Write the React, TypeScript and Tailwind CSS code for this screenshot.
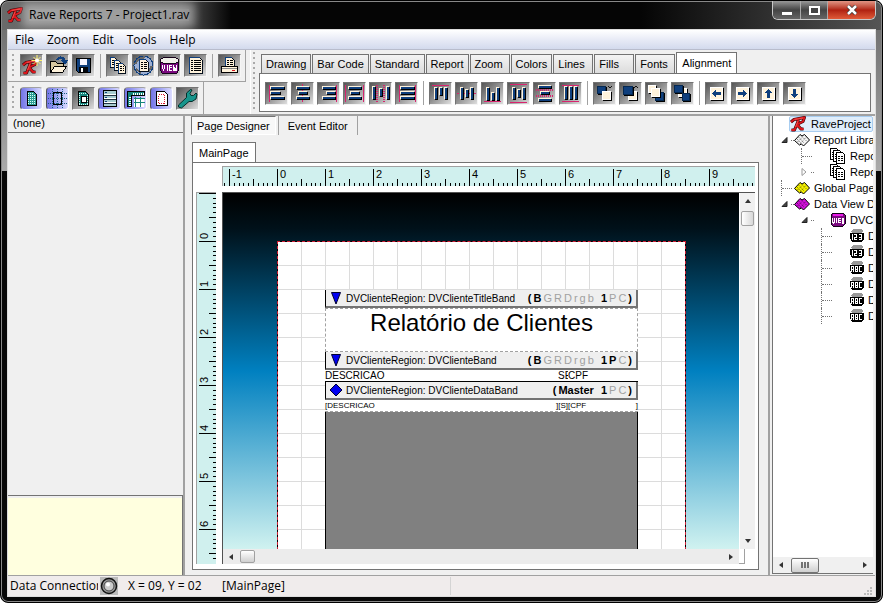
import React from 'react';

type Rect = [number, number, number, number];

const NAVY = '#0f3f7d';
const CREAM = '#fff3dc';
const PINK = '#d8246e';

/* ---------- icons ---------- */

const Glyph = ({ size = 21, children }: { size?: number; children: React.ReactNode }) => (
  <svg width={size} height={size} viewBox={`0 0 ${size} ${size}`} shapeRendering="crispEdges" aria-hidden="true" className="block shrink-0">
    {children}
  </svg>
);

const RaveMark = () => (
  <g fill="none" strokeLinejoin="round">
    <path d="M1.500 14h3L8.500 4M1 6 4 3.500 14.500 1.500 13 5.500 7 8.500l4 4.500h2.500" stroke="#3a0508" strokeWidth="3" />
    <path d="M1.500 14h3L8.500 4M1 6 4 3.500 14.500 1.500 13 5.500 7 8.500l4 4.500h2.500" stroke="#dc161c" strokeWidth="1.900" />
    <path d="M4.500 3.500 13 2M5.500 11l2.500-6" stroke="#ff7468" strokeWidth=".6" />
  </g>
);

const RaveLogo = () => (
  <svg width="16" height="16" viewBox="0 0 16 16" aria-hidden="true" className="block shrink-0">
    <RaveMark />
  </svg>
);

const Sheet = ({ x, y, w, h, lines = 3 }: { x: number; y: number; w: number; h: number; lines?: number }) => (
  <g>
    <path d={`M${x + 0.5} ${y + 0.5}h${w - 3}l3 3v${h - 3}h-${w}z`} fill={CREAM} stroke="#06101e" />
    <path d={`M${x + 0.5} ${y + h}V${y + 0.5}h${w - 3}`} stroke={NAVY} fill="none" />
    {Array.from({ length: lines }, (_, i) => (
      <path key={i} d={`M${x + 2} ${y + 3.5 + i * 2}h2m1 0h${w - 6}`} stroke="#000" />
    ))}
  </g>
);

const ViewDrum = () => (
  <Glyph>
    <path d="M1.500 5.500h18v10l-2 3h-14l-2-3z" fill="#7b0a80" stroke="#16021a" />
    <path d="M4.500 2.500h12l3 2v2l-3 2h-12l-3-2v-2z" fill="#f0f0e8" stroke="#16021a" />
    <path d="M3.500 10v3l1 2 1-2v-3M8.500 10v6M13 10.500h-2.500v5H13M10.500 12.500H13M14.500 10v5l1 .5.500-3 .5 3 1-.5V10" fill="none" stroke="#fff" />
  </Glyph>
);

const icons = {
  newReport: (
    <svg width="21" height="21" viewBox="0 0 21 21" aria-hidden="true" className="block shrink-0">
      <g transform="translate(1 4)">
        <RaveMark />
      </g>
      <path d="M16 0v11M10.500 5.500h10.500M12.500 2l7 7M19.500 2l-7 7" stroke="#fff36a" />
      <circle cx="16" cy="5.500" r="2" fill="#fff" />
    </svg>
  ),
  open: (
    <Glyph>
      <path d="M3.500 17.500v-11h5l2 2h6v3" fill="#d8c8a0" stroke="#000" />
      <path d="M3.500 17.500l4-6h12l-4 6z" fill={CREAM} stroke="#000" />
      <path d="M10 5c2-4 8-3 8 2m-3-2 3 3 2-3" fill="none" stroke={NAVY} strokeWidth="2" />
    </Glyph>
  ),
  save: (
    <Glyph>
      <path d="M3.500 3.500h14v14h-12l-2-2z" fill={NAVY} stroke="#000" />
      <path d="M7 4h7v6H7z" fill="#f4f4ff" />
      <path d="M6 12h9v5H6z" fill="#02060c" />
      <path d="M8 13h2v4H8z" fill="#fff" />
    </Glyph>
  ),
  copies: (
    <Glyph>
      <Sheet x={3} y={2} w={7} h={10} />
      <Sheet x={7} y={5} w={7} h={10} />
      <Sheet x={11} y={8} w={7} h={10} />
    </Glyph>
  ),
  globe: (
    <Glyph>
      <circle cx="10.500" cy="10.500" r="9.500" fill="#9db0d4" stroke={NAVY} />
      <path d="M2 9l4-5 6-2M3 14l5 4M15 17l4-6" stroke="#666" strokeWidth="2" fill="none" />
      <Sheet x={6} y={4} w={9} h={12} lines={4} />
    </Glyph>
  ),
  report: (
    <Glyph>
      <Sheet x={4} y={2} w={13} h={16} lines={6} />
    </Glyph>
  ),
  print: (
    <Glyph>
      <Sheet x={6} y={2} w={9} h={10} lines={3} />
      <path d="M2.500 11.500h16v6h-16z" fill={CREAM} stroke="#000" />
      <path d="M3 13.500h15" stroke="#888" />
      <path d="M13 15h3v1h-3z" fill="#d8141c" />
    </Glyph>
  ),
  gridPage: (
    <Glyph>
      <path d="M6.500 3.500h6l3 3v11h-9z" fill="#2c9c94" stroke="#000" />
      <path d="M7 5.500h6M7 7.500h8M7 9.500h8M7 11.500h8M7 13.500h8M7 15.500h8" stroke="#d8fff8" strokeDasharray="1 1" />
    </Glyph>
  ),
  snapGrid: (
    <Glyph>
      <path d="M1 5.500h19M1 15.500h19M5.500 1v19M15.500 1v19M10.500 1v19M1 10.500h19" stroke="#17607c" strokeDasharray="1 1" fill="none" />
      <path d="M6.500 4.500h8v12h-8z" fill="none" stroke="#000" />
    </Glyph>
  ),
  pageBox: (
    <Glyph>
      <path d="M5.500 3.500h7l3 3v11h-10z" fill="#17857c" stroke="#000" />
      <path d="M6 5.500h7M6.500 7v10M14.500 7v10M6 16.500h9" stroke="#d8fff8" strokeDasharray="1 1" />
      <path d="M8.500 8.500h5v6h-5z" fill="#fff" stroke="#000" />
    </Glyph>
  ),
  bands: (
    <Glyph>
      <path d="M4.500 2.500h13v16h-13z" fill="#a8ccd0" stroke="#000" />
      <path d="M5 7.500h12M5 11.500h12M5 15.500h12" stroke="#234" />
      <path d="M5 6.500h12M5 10.500h12M5 14.500h12" stroke="#fff" />
      <path d="M6 4.500h2M6 9.500h2M6 13.500h2" stroke={NAVY} />
    </Glyph>
  ),
  rulers: (
    <Glyph>
      <path d="M2.500 3.500h17v4h-13v11h-4z" fill="#17857c" stroke="#000" />
      <path d="M8 5.500h11M4.500 9v9" stroke="#fff" strokeWidth="2" strokeDasharray="1 1" />
      <path d="M9 10h10v9H9z" fill="#fff" />
      <path d="M9 10.500h11M9 14.500h11M10.500 9v10M15.500 9v10" stroke="#17857c" />
    </Glyph>
  ),
  marginPage: (
    <Glyph>
      <path d="M5.500 3.500h8l3 3v11h-11z" fill="#fff" stroke="#000" />
      <path d="M7.500 6.500h6v9h-6z" fill="none" stroke="#d8142c" strokeDasharray="1 1" />
    </Glyph>
  ),
  wrench: (
    <svg width="21" height="21" viewBox="0 0 21 21" aria-hidden="true" className="block shrink-0">
      <path d="M1.500 17 9.500 9.500V5l4-3.500 1.500.5-2 3.500 1 2 2.500 0 2.500-2.500 1 1-1 5-4 2.500h-3L4.500 20l-3-1z" fill="#17958c" stroke="#04302c" />
    </svg>
  ),
};

const Bar = ({ r: [x, y, w, h] }: { r: Rect }) => (
  <g>
    <rect x={x + 1} y={y + 1} width={w} height={h} fill="#000" />
    <rect x={x} y={y} width={w} height={h} fill={CREAM} />
    <rect x={x + 1} y={y + 1} width={w - 1} height={h - 1} fill={NAVY} />
  </g>
);

const Aligner = ({ bars, guides = [], dotted = '' }: { bars: Rect[]; guides?: Rect[]; dotted?: string }) => (
  <Glyph>
    {dotted && <path d={dotted} stroke={PINK} strokeWidth="2" strokeDasharray="1 1" fill="none" />}
    {bars.map((r, i) => (
      <Bar key={i} r={r} />
    ))}
    {guides.map(([x, y, width, height], i) => (
      <rect key={i} x={x} y={y} width={width} height={height} fill={PINK} />
    ))}
  </Glyph>
);

const rows = (xs: number[], ws: number[]): Rect[] => xs.map((x, i) => [x, 3 + i * 5, ws[i], 3]);
const cols = (ys: number[], hs: number[]): Rect[] => ys.map((y, i) => [4 + i * 5, y, 3, hs[i]]);

const Squares = ({ items, chevron = '' }: { items: { r: Rect; navy?: boolean }[]; chevron?: string }) => (
  <Glyph>
    {items.map(({ r: [x, y, w, h], navy }, i) => (
      <g key={i}>
        <rect x={x + 1} y={y + 1} width={w} height={h} fill="#000" />
        <rect x={x} y={y} width={w} height={h} fill={navy ? '#06284f' : '#fff'} />
        <rect x={x + 1} y={y + 1} width={w - 2} height={h - 2} fill={navy ? NAVY : CREAM} />
      </g>
    ))}
    {chevron && <path d={chevron} stroke="#111" fill="none" />}
  </Glyph>
);

const Nudge = ({ angle }: { angle: number }) => (
  <Glyph>
    <path d="M5 5h13v13H5z" fill="#000" />
    <path d="M4 4h13v13H4z" fill="#fff" />
    <path d="M5 5h11v11H5z" fill={CREAM} />
    <g transform={`rotate(${angle} 10.500 10.500)`}>
      <path d="M6 10.500 10 6v3h5v3h-5v3z" fill={NAVY} />
    </g>
  </Glyph>
);

/* ---------- toolbars ---------- */

type Tool = { label: string; icon: React.ReactNode; on?: boolean };

const ToolButton = ({ label, icon, on }: Tool) => (
  <button
    type="button"
    aria-label={label}
    aria-pressed={on}
    className={
      on
        ? 'flex h-[23px] w-[23px] items-center justify-center rounded-sm border border-r-white border-b-white border-l-neutral-600 border-t-neutral-400 bg-linear-to-r from-[#7474e6] to-[#dcdcff]'
        : 'flex h-[23px] w-[23px] items-center justify-center border border-r-neutral-100 border-b-neutral-100 border-l-neutral-500 border-t-neutral-500 bg-linear-to-br from-[#555] to-[#dedede]'
    }
  >
    {icon}
  </button>
);

const ToolGroups = ({ groups }: { groups: Tool[][] }) => (
  <div className="flex items-center gap-[3px]">
    {groups.map((group, i) => (
      <React.Fragment key={i}>
        {i > 0 && <span className="mx-0.5 h-6 w-px bg-neutral-400" />}
        {group.map((t) => (
          <ToolButton key={t.label} {...t} />
        ))}
      </React.Fragment>
    ))}
  </div>
);

const Grip = () => <span className="w-0.5 shrink-0 self-stretch bg-[repeating-linear-gradient(#aaa_0_2px,transparent_2px_5px)]" />;

const fileTools: Tool[][] = [
  [
    { label: 'New', icon: icons.newReport },
    { label: 'Open', icon: icons.open },
    { label: 'Save', icon: icons.save },
  ],
  [
    { label: 'New report', icon: icons.copies },
    { label: 'New global page', icon: icons.globe },
    { label: 'New data object', icon: <ViewDrum /> },
    { label: 'New report page', icon: icons.report },
  ],
  [{ label: 'Execute report', icon: icons.print }],
];

const designTools: Tool[][] = [
  [
    { label: 'Show grid', icon: icons.gridPage, on: true },
    { label: 'Snap to grid', icon: icons.snapGrid, on: true },
    { label: 'Grid on top', icon: icons.pageBox },
    { label: 'Show band headers', icon: icons.bands, on: true },
    { label: 'Show rulers', icon: icons.rulers, on: true },
    { label: 'Show waste area', icon: icons.marginPage, on: true },
    { label: 'Preferences', icon: icons.wrench },
  ],
];

const alignTools: Tool[][] = [
  [
    { label: 'Align left', icon: <Aligner bars={rows([4, 4, 4], [14, 10, 14])} guides={[[3, 2, 1, 17]]} /> },
    { label: 'Center horizontally', icon: <Aligner bars={rows([4, 6, 4], [13, 9, 13])} guides={[[10, 1, 1, 2], [10, 7, 1, 1], [10, 12, 1, 1], [10, 17, 1, 2]]} /> },
    { label: 'Align right', icon: <Aligner bars={rows([4, 8, 4], [13, 9, 13])} guides={[[18, 2, 1, 17]]} /> },
    { label: 'Center in parent', icon: <Aligner bars={rows([4, 6, 4], [13, 9, 13])} guides={[[1, 2, 1, 17], [19, 2, 1, 17]]} /> },
    { label: 'Space horizontally', icon: <Aligner bars={[[2, 3, 3, 13], [9, 5, 3, 8], [16, 3, 3, 13]]} dotted="M7 2v17M14 2v17" /> },
    { label: 'Equate widths', icon: <Aligner bars={rows([4, 4, 4], [14, 14, 14])} guides={[[3, 2, 1, 17], [19, 2, 1, 17]]} /> },
  ],
  [
    { label: 'Align tops', icon: <Aligner bars={cols([4, 4, 4], [12, 8, 12])} guides={[[2, 2, 17, 1]]} /> },
    { label: 'Center vertically', icon: <Aligner bars={cols([4, 6, 4], [12, 8, 12])} guides={[[1, 10, 2, 1], [8, 10, 1, 1], [13, 10, 1, 1], [18, 10, 2, 1]]} /> },
    { label: 'Align bottoms', icon: <Aligner bars={cols([4, 9, 4], [13, 8, 13])} guides={[[2, 18, 17, 1]]} /> },
    { label: 'Center in parent vertically', icon: <Aligner bars={cols([4, 6, 4], [12, 8, 12])} guides={[[2, 1, 17, 1], [2, 19, 17, 1]]} /> },
    { label: 'Space vertically', icon: <Aligner bars={[[4, 2, 13, 3], [6, 8, 9, 3], [4, 15, 13, 3]]} dotted="M2 7h17M2 13h17" /> },
    { label: 'Equate heights', icon: <Aligner bars={cols([3, 3, 3], [13, 13, 13])} guides={[[2, 2, 17, 1], [2, 18, 17, 1]]} /> },
  ],
  [
    { label: 'Move forward', icon: <Squares items={[{ r: [3, 3, 9, 8], navy: true }, { r: [8, 8, 9, 9] }]} chevron="M14 3l2 2 2-2" /> },
    { label: 'Move behind', icon: <Squares items={[{ r: [8, 8, 9, 9] }, { r: [3, 3, 10, 9], navy: true }]} chevron="M14 5l2-2 2 2" /> },
    { label: 'Bring to front', icon: <Squares items={[{ r: [9, 9, 9, 9], navy: true }, { r: [2, 2, 8, 8] }, { r: [5, 5, 9, 9] }]} /> },
    { label: 'Send to back', icon: <Squares items={[{ r: [6, 5, 9, 9] }, { r: [2, 2, 9, 8], navy: true }, { r: [10, 10, 8, 8], navy: true }]} /> },
  ],
  [
    { label: 'Tap left', icon: <Nudge angle={0} /> },
    { label: 'Tap right', icon: <Nudge angle={180} /> },
    { label: 'Tap up', icon: <Nudge angle={90} /> },
    { label: 'Tap down', icon: <Nudge angle={270} /> },
  ],
];

const toolTabs = ['Drawing', 'Bar Code', 'Standard', 'Report', 'Zoom', 'Colors', 'Lines', 'Fills', 'Fonts'];

const Toolbars = () => (
  <div className="flex h-16 shrink-0">
    <div className="shrink-0">
      <div className="flex h-8 w-fit items-center border-r border-b border-neutral-400 px-1 py-1">
        <Grip />
        <span className="w-1.5" />
        <ToolGroups groups={fileTools} />
      </div>
      <div className="flex h-8 w-fit items-center border-r border-neutral-400 px-1 py-1">
        <Grip />
        <span className="w-1.5" />
        <ToolGroups groups={designTools} />
      </div>
    </div>
    <div className="ml-1 flex min-w-0 flex-1 gap-1 border-l border-white pt-0.5 pr-1 pb-0.5 pl-0.5">
      <Grip />
      <div className="flex min-w-0 flex-1 flex-col">
        <div role="tablist" className="flex items-end gap-px pl-0.5">
          {toolTabs.map((t) => (
            <button
              key={t}
              type="button"
              role="tab"
              className="h-[19px] min-w-[40px] border border-b-0 border-neutral-500 bg-linear-to-b from-[#f4f4f4] to-[#dcdcdc] px-1 text-left whitespace-nowrap"
            >
              {t}
            </button>
          ))}
          <button type="button" role="tab" aria-selected="true" className="-mb-px h-[22px] border border-b-0 border-neutral-500 bg-white px-[5px] pb-px">
            Alignment
          </button>
        </div>
        <div className="flex flex-1 items-center border border-neutral-500 bg-white px-[5px] pt-px">
          <ToolGroups groups={alignTools} />
        </div>
      </div>
    </div>
  </div>
);

/* ---------- window chrome ---------- */

const TitleBar = () => (
  <div className="flex h-7 shrink-0 items-start justify-between">
    <div className="flex h-7 items-center gap-1.5">
      <RaveLogo />
      <h1 className="bg-white/40 font-['Open_Sans',sans-serif] text-[12px] leading-3 text-black shadow-[0_0_8px_6px_rgba(255,255,255,0.4)]">
        Rave Reports 7 - Project1.rav
      </h1>
    </div>
    <div className="flex h-[19px] overflow-hidden rounded-b-md border border-t-0 border-[#c8c8c8]">
      <button type="button" aria-label="Minimize" className="flex w-7 items-center justify-center border-r border-[#aaa] bg-linear-to-b from-[#999] via-[#444] via-50% to-[#666]">
        <span className="mt-1.5 h-[3px] w-2.5 bg-white" />
      </button>
      <button type="button" aria-label="Maximize" className="flex w-[27px] items-center justify-center border-r border-[#aaa] bg-linear-to-b from-[#999] via-[#444] via-50% to-[#666]">
        <span className="h-[9px] w-[11px] border-2 border-white bg-[#444]" />
      </button>
      <button type="button" aria-label="Close" className="flex w-[47px] items-center justify-center bg-linear-to-b from-[#e09484] via-[#b02010] via-50% to-[#e05a38]">
        <svg width="12" height="10" viewBox="0 0 12 10" aria-hidden="true">
          <path d="M2 1l8 8M10 1 2 9" stroke="#333" strokeWidth="4" />
          <path d="M2 1l8 8M10 1 2 9" stroke="#fff" strokeWidth="2.500" />
        </svg>
      </button>
    </div>
  </div>
);

const MenuBar = () => (
  <nav className="flex h-5 shrink-0 items-center gap-[13px] border-b border-[#b8bccc] bg-linear-to-b from-white via-[#e8ebf6] to-[#d3daed] pl-[7px] font-['Open_Sans',sans-serif] text-[12px]">
    {['File', 'Zoom', 'Edit', 'Tools', 'Help'].map((m) => (
      <button key={m} type="button">
        {m}
      </button>
    ))}
  </nav>
);

const Arrow = ({ dir }: { dir: 'up' | 'down' | 'left' | 'right' }) => {
  const d = { up: 'M1 6l3-4 3 4z', down: 'M1 2l3 4 3-4z', left: 'M6 1 2 4l4 3z', right: 'M2 1l4 3-4 3z' }[dir];
  return (
    <svg width="8" height="8" viewBox="0 0 8 8" aria-hidden="true">
      <path d={d} fill="#333" />
    </svg>
  );
};

/* ---------- rulers ---------- */

const INCH = 48;

// ticks run every tenth of an inch, labels sit on whole inches
const Ruler = ({ origin, first, last, vertical }: { origin: number; first: number; last: number; vertical?: boolean }) => {
  const ticks = Array.from({ length: last - first + 1 }, (_, i) => i + first);
  return (
    <svg width={vertical ? 19 : '100%'} height={vertical ? '100%' : 19} className="block" aria-hidden="true">
      {ticks.map((t) => {
        const p = Math.round(origin + (t * INCH) / 10) + 0.5;
        const len = t % 10 === 0 ? 17 : t % 5 === 0 ? 7 : 3;
        return <path key={t} d={vertical ? `M${19 - len} ${p}h${len}` : `M${p} ${19 - len}v${len}`} stroke="#000" />;
      })}
      {ticks
        .filter((t) => t % 10 === 0 && !(vertical && t < 0))
        .map((t) => {
          const p = Math.round(origin + (t * INCH) / 10);
          return vertical ? (
            <text key={t} transform={`translate(11 ${p - 2}) rotate(-90)`} fontSize="11">
              {t / 10}
            </text>
          ) : (
            <text key={t} x={p + 3} y="11" fontSize="11">
              {t / 10}
            </text>
          );
        })}
    </svg>
  );
};

/* ---------- page designer ---------- */

type Flag = [text: string, on: boolean];

const titleFlags: Flag[] = [['(', true], ['B', true], ['G', false], ['R', false], ['D', false], ['r', false], ['g', false], ['b', false], ['\u00a0', false], ['1', true], ['P', false], ['C', false], [')', true]];
const bandFlags: Flag[] = titleFlags.map(([t, on]) => [t, on || t === 'P']);
const dataFlags: Flag[] = [['(', true], ['Master', true], ['\u00a0', false], ['1', true], ['P', false], ['C', false], [')', true]];

const BandHeader = ({ name, flags, diamond }: { name: string; flags: Flag[]; diamond?: boolean }) => (
  <div className="flex h-[18px] shrink-0 items-center border-r-2 border-b-2 border-l border-r-neutral-500 border-b-neutral-500 border-l-black bg-[#efefef]">
    <svg width="14" height="14" viewBox="0 0 14 14" className="mx-[3px] shrink-0" aria-hidden="true">
      <path d={diamond ? 'M7 1l6 6-6 6-6-6z' : 'M2.500 1.500h9L7 13z'} fill="#0000f0" stroke="#000030" />
    </svg>
    <span className="flex-1 text-[10px] whitespace-nowrap">DVClienteRegion: {name}</span>
    <span className="flex gap-0.5 pr-1">
      {flags.map(([t, on], i) => (
        <span key={i} className={on ? 'font-bold' : 'text-neutral-400'}>
          {t}
        </span>
      ))}
    </span>
  </div>
);

const Region = () => (
  <div className="flex w-[313px] flex-1 flex-col bg-white">
    <BandHeader name="DVClienteTitleBand" flags={titleFlags} />
    <div className="h-11 shrink-0 border border-dashed border-neutral-400 text-center text-[24px] leading-7">Relatório de Clientes</div>
    <BandHeader name="DVClienteBand" flags={bandFlags} />
    <div className="flex h-3 shrink-0 border-b border-black text-[10px] leading-[11px] whitespace-nowrap">
      <span className="w-[233px]">DESCRICAO</span>
      <span className="w-[10px] overflow-hidden">SE</span>
      <span>CPF</span>
    </div>
    <BandHeader name="DVClienteDataBand" flags={dataFlags} diamond />
    <div className="flex h-3 shrink-0 border-b border-dashed border-neutral-400 text-[8px] leading-[11px] whitespace-nowrap">
      <span className="w-[231px]">[DESCRICAO</span>
      <span>][S</span>
      <span>][</span>
      <span className="flex-1">CPF</span>
      <span>]</span>
    </div>
    <div className="flex-1 border-x border-black bg-[#808080]" />
  </div>
);

const Canvas = () => (
  <div className="flex min-h-0 min-w-0 flex-1 flex-col border-t border-l border-neutral-600">
    <div className="flex min-h-0 flex-1">
      <div className="flex min-w-0 flex-1 overflow-hidden bg-[linear-gradient(#000_0%,#00111a_10%,#0080c0_50%,#d0f2f0_100%)] pt-12 pl-[54px]">
        <div className="-mb-px flex w-[409px] shrink-0 flex-col border border-dashed border-[#d01c34] bg-black">
          <div className="flex flex-1 flex-col bg-white bg-[linear-gradient(90deg,transparent_23px,#dcdcdc_23px),linear-gradient(transparent_23px,#dcdcdc_23px)] bg-[size:24px_24px] pt-12 pl-[47px]">
            <Region />
          </div>
        </div>
      </div>
      <div className="flex w-4 flex-col items-center justify-between border-l border-white bg-[#f0f0f0] py-1">
        <div className="flex flex-col items-center gap-1.5">
          <Arrow dir="up" />
          <span className="h-[15px] w-[13px] rounded-xs border border-neutral-400 bg-linear-to-r from-white to-[#d8d8d8]" />
        </div>
        <Arrow dir="down" />
      </div>
    </div>
    <div className="flex h-[15px] shrink-0">
      <div className="flex flex-1 items-center justify-between bg-[#ececec] px-1">
        <div className="flex items-center gap-[5px]">
          <Arrow dir="left" />
          <span className="h-[13px] w-[15px] rounded-xs border border-neutral-400 bg-linear-to-b from-white to-[#d0d0d0]" />
        </div>
        <Arrow dir="right" />
      </div>
      <span className="w-1.5 border-r border-b border-neutral-400 bg-white" />
      <span className="w-2.5 bg-white" />
    </div>
  </div>
);

const Designer = () => (
  <main className="flex min-w-0 flex-1 flex-col pr-[9px]">
    <div role="tablist" className="flex h-[26px] items-start gap-0.5 pl-[3px]">
      <button type="button" role="tab" aria-selected="true" className="h-[19px] border border-t-neutral-500 border-r-white border-b-white border-l-neutral-500 bg-[#f8f8f8] px-[5px] leading-4 whitespace-nowrap">
        Page Designer
      </button>
      <button type="button" role="tab" className="h-[19px] border-x border-neutral-400 px-[9px] leading-4 whitespace-nowrap">
        Event Editor
      </button>
    </div>
    <div role="tablist" className="ml-1 flex">
      <button type="button" role="tab" aria-selected="true" className="-mb-px h-[21px] border border-b-0 border-neutral-500 bg-white px-[6px] text-[11px]">
        MainPage
      </button>
    </div>
    <div className="mb-[5px] ml-1 flex min-h-0 flex-1 flex-col gap-1.5 border border-neutral-500 bg-white pt-[3px] pr-[3px] pb-[5px] pl-[3px]">
      <div className="flex h-5 shrink-0 pl-[26px]">
        <div className="min-w-0 flex-1 overflow-hidden border-t border-l border-neutral-400 bg-[#d0f0ee]">
          <Ruler origin={54} first={-11} last={99} />
        </div>
      </div>
      <div className="flex min-h-0 flex-1 gap-1.5">
        <div className="w-5 shrink-0 overflow-hidden border-t border-l border-neutral-400 bg-[#d0f0ee]">
          <Ruler origin={48} first={-10} last={66} vertical />
        </div>
        <Canvas />
      </div>
    </div>
  </main>
);

/* ---------- project tree ---------- */

const Book = ({ fill }: { fill: string }) => (
  <svg width="16" height="14" viewBox="0 0 16 14" className="shrink-0" aria-hidden="true">
    <path d="M.5 7.500 6 1.500l2 1.500 2.500-1.500 5 5.500-6 6L7.500 11l-2 1z" fill={fill} stroke="#000" />
    <path d="M8 3.500l5 5M4.500 4l5.500 6M3 6l4.500 4.500M3.500 9 9 3.500M6 11l6-6.500" stroke="#000" strokeWidth=".6" strokeDasharray="1 1.500" />
  </svg>
);

const Pages = () => (
  <Glyph size={16}>
    {[0, 3, 6].map((o) => (
      <g key={o} transform={`translate(${o} ${(o / 3) * 2})`}>
        <path d="M.5.5h6l2 2v9h-8z" fill="#fff" stroke="#000" />
        <path d="M2 4.500h5M2 6.500h5M2 8.500h5" stroke="#000" strokeDasharray="2 1" />
      </g>
    ))}
  </Glyph>
);

const SmallDrum = () => (
  <Glyph size={16}>
    <path d="M1 3l2-2h10l2 2v9l-2 2H3l-2-2z" fill="#7b0a80" stroke="#16021a" />
    <path d="M3 2h10v2H3z" fill="#e81ae8" />
    <path d="M2.500 6v4l1 1 1-1V6M6.500 6v5M10.500 6.500h-2v4h2M8.500 8.500h2M12.500 6v5h1V6" fill="none" stroke="#fff" />
  </Glyph>
);

const FieldIcon = ({ kind }: { kind: '123' | 'ABC' }) => (
  <Glyph size={14}>
    <path d="M0 4h14v6l-1 1v1l-2 1H3l-2-1v-1l-1-1z" fill="#000" />
    <path d="M3 0h8l2 2v1l-2 1H3L1 3V2z" fill="#999" />
    {kind === '123' ? (
      <path d="M2.500 5v6M4 5.500h2.500v3h-2v2H7M9 5.500h2.500v5H9M9 8.500h2" fill="none" stroke="#fff" />
    ) : (
      <path d="M1.500 11V5.500h2V11M1.500 8.500h2M5.500 5.500h2v5h-2zM5.500 8.500h2M12 5.500H9.500v5H12" fill="none" stroke="#fff" />
    )}
  </Glyph>
);

const Twist = ({ kind }: { kind: 'open' | 'closed' | 'leaf' }) =>
  kind === 'leaf' ? (
    <span className="flex w-[13px] items-center self-stretch border-l border-dotted border-neutral-500">
      <span className="w-2.5 border-t border-dotted border-neutral-500" />
    </span>
  ) : (
    <span className="flex w-[13px] items-center justify-between">
      <svg width="7" height="8" viewBox="0 0 7 8" aria-hidden="true">
        {kind === 'open' ? <path d="M6 1.500v5H1z" fill="#444" stroke="#222" /> : <path d="M1 .5 5 4 1 7.500z" fill="#fff" stroke="#999" />}
      </svg>
      <span className="w-[3px] border-t border-dotted border-neutral-500" />
    </span>
  );

const Node = ({ indent, twist, icon, label }: { indent: string; twist: 'open' | 'closed' | 'leaf'; icon: React.ReactNode; label: string }) => (
  <li className={`flex h-4 items-center gap-1 whitespace-nowrap ${indent}`}>
    <span className="flex items-center self-stretch">
      <Twist kind={twist} />
      {indent !== 'pl-2' && <span className="w-4" />}
      {icon}
    </span>
    {label}
  </li>
);

const ProjectTree = () => (
  <aside className="flex w-[107px] shrink-0 flex-col border-l-2 border-neutral-400 bg-[#f0f0f0] pr-0.5 pb-px">
    <div className="ml-0.5 flex min-h-0 flex-1 flex-col overflow-hidden border-b border-l border-neutral-500 bg-white">
      <ul className="flex-1 overflow-hidden">
        <li className="ml-4 flex h-4 items-center gap-[5px] rounded-xs border border-[#a8cdf0] bg-[#e0eefb] whitespace-nowrap">
          <RaveLogo />
          RaveProject
        </li>
        <Node indent="pl-2" twist="open" icon={<Book fill="#f4f4f4" />} label="Report Library" />
        <Node indent="pl-7" twist="leaf" icon={<Pages />} label="Report1" />
        <Node indent="pl-7" twist="closed" icon={<Pages />} label="Report2" />
        <Node indent="pl-2" twist="leaf" icon={<Book fill="#f4f000" />} label="Global Page" />
        <Node indent="pl-2" twist="open" icon={<Book fill="#d010d8" />} label="Data View D" />
        <Node indent="pl-7" twist="open" icon={<SmallDrum />} label="DVC" />
        {(['123', '123', 'ABC', 'ABC', 'ABC', 'ABC'] as const).map((k, i) => (
          <Node key={i} indent="pl-12" twist="leaf" icon={<FieldIcon kind={k} />} label="D" />
        ))}
      </ul>
      <div className="flex h-4 shrink-0 items-center justify-between bg-[#f0f0f0] px-1">
        <span className="flex items-center gap-1.5">
          <Arrow dir="left" />
          <span className="flex h-[15px] w-7 items-center justify-center gap-px rounded-xs border border-neutral-500 bg-linear-to-b from-white to-[#cfcfcf]">
            <i className="h-1.5 w-0.5 bg-neutral-500" />
            <i className="h-1.5 w-0.5 bg-neutral-500" />
            <i className="h-1.5 w-0.5 bg-neutral-500" />
          </span>
        </span>
        <Arrow dir="right" />
      </div>
    </div>
  </aside>
);

const Inspector = () => (
  <aside className="mr-[3px] flex w-[177px] shrink-0 flex-col border-r-2 border-neutral-400">
    <div className="h-[17px] border-b border-neutral-500 pl-[5px] leading-[14px]">(none)</div>
    <div className="flex-1" />
    <div className="h-20 border-t border-r border-neutral-500 bg-[#ffffdf] shadow-[inset_0_2px_0_#f0f0f0]" />
  </aside>
);

const StatusBar = () => (
  <footer className="flex h-[21px] shrink-0 items-center border-t border-neutral-400 bg-[#f0ecec] font-['Open_Sans',sans-serif] text-[12px] whitespace-nowrap">
    <span className="w-[90px] overflow-hidden pl-0.5">Data Connection</span>
    <svg width="18" height="18" viewBox="0 0 18 18" className="ml-0.5" aria-hidden="true">
      <path d="M0 0h18v18H0z" fill="#bbb" />
      <circle cx="9" cy="9" r="7.500" fill="#999" stroke="#111" strokeWidth="1.500" />
      <circle cx="9" cy="9" r="5" fill="#ccc" stroke="#444" />
      <circle cx="8" cy="7.500" r="2" fill="#fff" />
    </svg>
    <span className="ml-2.5 w-[94px]">X = 09, Y = 02</span>
    <span className="w-[229px] border-r border-neutral-300">[MainPage]</span>
    <svg width="10" height="10" viewBox="0 0 10 10" className="mr-0.5 ml-auto self-end" aria-hidden="true">
      <path d="M7 1h2v2H7zM4 4h2v2H4zM7 4h2v2H7zM1 7h2v2H1zM4 7h2v2H4zM7 7h2v2H7z" fill="#bbb" />
    </svg>
  </footer>
);

export default function App() {
  return (
    <div className="flex h-screen w-full flex-col rounded-lg border border-black bg-[linear-gradient(90deg,#6a6a6a_0,#555_180px,#050505_230px,#050505_640px,#555_100%),linear-gradient(#666_0,#aaa_170px,#080808_170px)] bg-[size:100%_29px,100%_100%] bg-no-repeat px-1.5 pb-[5px] font-['Liberation_Sans',Arial,sans-serif] text-[11px] text-black shadow-[inset_0_0_0_1px_#888]">
      <TitleBar />
      <div className="flex min-h-0 flex-1 flex-col border border-[#ddd] bg-[#f0f0f0]">
        <MenuBar />
        <Toolbars />
        <div className="flex min-h-0 flex-1 border-t-2 border-neutral-400">
          <Inspector />
          <Designer />
          <ProjectTree />
        </div>
        <StatusBar />
      </div>
    </div>
  );
}
